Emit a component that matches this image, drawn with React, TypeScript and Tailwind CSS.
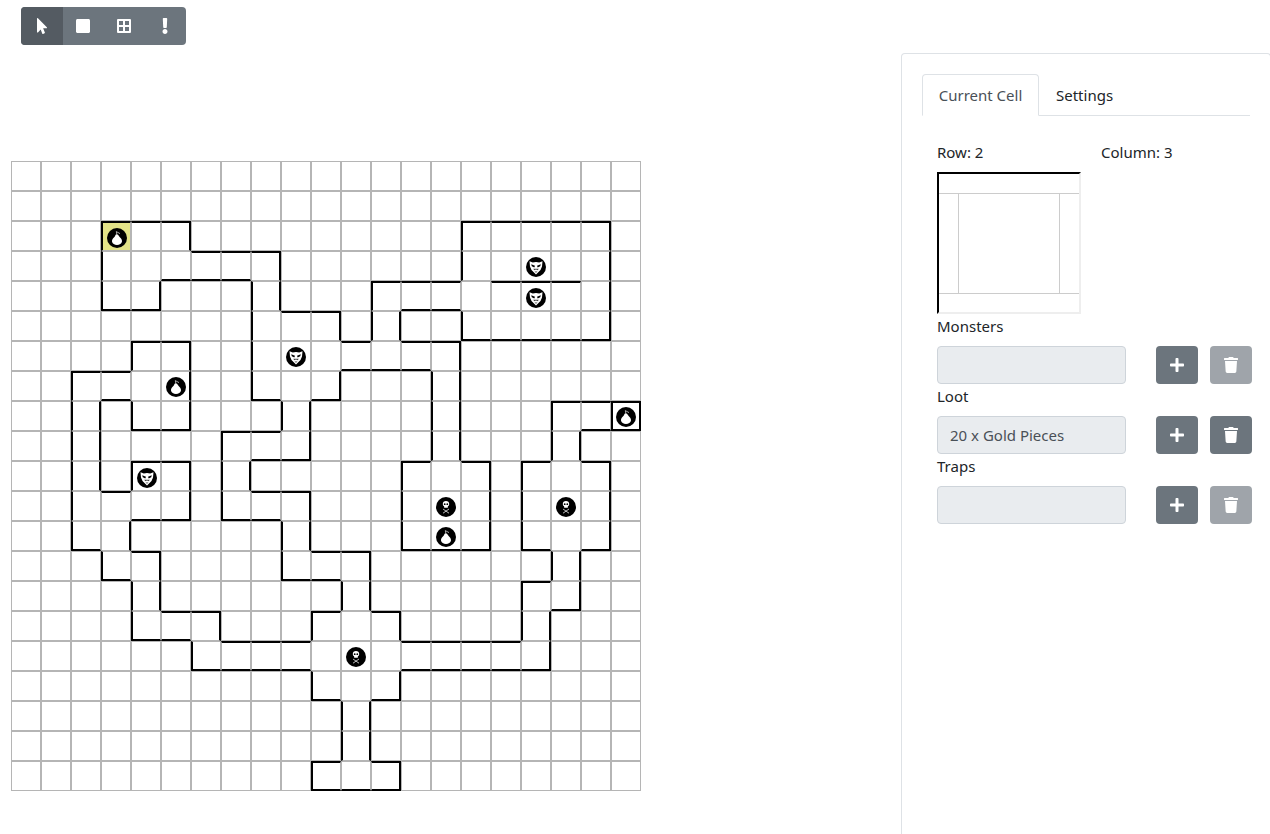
import { FaBorderAll, FaExclamation, FaMousePointer, FaPlus, FaSquare, FaTrash } from "react-icons/fa";

const SIZE = 21;

// [line, from, to, owner] - the wall is drawn inside the cell on the owner's side
const H_WALLS: [number, number, number, "a" | "b"][] = [
  [2, 3, 6, "b"], [3, 6, 9, "b"], [5, 9, 11, "b"], [6, 11, 12, "b"], [4, 12, 15, "b"], [2, 15, 20, "b"],
  [6, 15, 20, "a"], [5, 13, 15, "a"], [6, 13, 15, "b"], [10, 15, 16, "b"], [13, 13, 16, "a"], [10, 13, 14, "b"],
  [7, 11, 14, "a"], [8, 10, 11, "a"], [10, 8, 10, "a"], [11, 8, 10, "b"], [13, 10, 12, "b"], [15, 12, 13, "b"],
  [16, 13, 17, "b"], [14, 17, 18, "b"], [13, 17, 18, "a"], [10, 17, 18, "b"], [8, 18, 21, "b"], [9, 20, 21, "a"],
  [9, 19, 20, "a"], [10, 19, 20, "b"], [13, 19, 20, "a"], [15, 18, 19, "a"], [17, 13, 18, "a"], [18, 12, 13, "a"],
  [20, 12, 13, "b"], [21, 10, 13, "a"], [20, 10, 11, "b"], [18, 10, 11, "a"], [17, 6, 10, "a"], [16, 4, 6, "a"],
  [14, 3, 4, "a"], [13, 2, 3, "a"], [7, 2, 4, "b"], [6, 4, 6, "b"], [9, 4, 6, "a"], [8, 3, 4, "a"],
  [11, 3, 4, "b"], [10, 4, 6, "b"], [12, 4, 6, "a"], [13, 4, 5, "b"], [15, 5, 7, "b"], [16, 7, 10, "b"],
  [15, 10, 11, "b"], [14, 9, 11, "a"], [12, 7, 9, "a"], [9, 7, 9, "b"], [8, 8, 9, "a"], [4, 5, 8, "a"],
  [5, 3, 5, "a"], [4, 16, 19, "b"],
];

const V_WALLS: [number, number, number, "l" | "r"][] = [
  [3, 2, 5, "r"], [6, 2, 3, "l"], [9, 3, 5, "l"], [11, 5, 6, "l"], [12, 4, 6, "r"], [15, 2, 4, "r"],
  [20, 2, 6, "l"], [15, 5, 6, "r"], [13, 5, 6, "l"], [15, 6, 10, "l"], [16, 10, 13, "l"], [13, 10, 13, "r"],
  [14, 7, 10, "r"], [11, 7, 8, "l"], [10, 8, 10, "l"], [8, 10, 11, "l"], [10, 11, 13, "l"], [12, 13, 15, "l"],
  [13, 15, 16, "l"], [17, 14, 16, "r"], [18, 13, 14, "r"], [17, 10, 13, "r"], [18, 8, 10, "r"], [20, 8, 9, "r"],
  [21, 8, 9, "l"], [19, 9, 10, "l"], [20, 10, 13, "l"], [19, 13, 15, "l"], [18, 15, 17, "l"], [13, 17, 18, "l"],
  [12, 18, 20, "l"], [13, 20, 21, "l"], [10, 20, 21, "r"], [11, 18, 20, "r"], [10, 17, 18, "r"], [6, 16, 17, "r"],
  [4, 14, 16, "r"], [3, 13, 14, "r"], [2, 7, 13, "r"], [4, 6, 7, "r"], [6, 6, 9, "l"], [4, 8, 9, "r"],
  [3, 8, 11, "l"], [4, 10, 11, "r"], [6, 10, 12, "l"], [4, 12, 13, "l"], [5, 13, 15, "l"], [7, 15, 16, "l"],
  [10, 15, 16, "r"], [11, 14, 15, "r"], [9, 12, 14, "r"], [7, 9, 12, "r"], [9, 8, 9, "r"], [8, 4, 8, "r"],
  [5, 4, 5, "l"],
];

const ICONS: Record<string, "loot" | "monster" | "trap"> = {
  "2,3": "loot", "7,5": "loot", "8,20": "loot", "12,14": "loot",
  "3,17": "monster", "4,17": "monster", "6,9": "monster", "10,4": "monster",
  "11,14": "trap", "11,18": "trap", "16,11": "trap",
};

function buildWalls() {
  const walls: Record<string, string> = {};
  const add = (r: number, c: number, side: string) => {
    walls[`${r},${c}`] = (walls[`${r},${c}`] || "") + side;
  };
  H_WALLS.forEach(([line, from, to, owner]) => {
    for (let c = from; c < to; c++) {
      if (owner === "b") add(line, c, "t");
      else add(line - 1, c, "b");
    }
  });
  V_WALLS.forEach(([line, from, to, owner]) => {
    for (let r = from; r < to; r++) {
      if (owner === "r") add(r, line, "l");
      else add(r, line - 1, "r");
    }
  });
  return walls;
}

const WALLS = buildWalls();

function LootIcon() {
  return (
    <svg viewBox="0 0 20 20" className="w-5 h-5 mt-[2px]">
      <circle cx="10" cy="10" r="10" fill="#000" />
      <path d="M9.600 6.200C8.400 6.400 8.300 7.900 7.400 8.900 6 10.100 4.800 11.700 5 13.600 5.300 15.900 7.600 17 10 17s4.700-1.100 5-3.400C15.200 11.700 14 10.100 12.600 8.900 11.700 7.900 11.200 6.200 9.600 6.200Z" fill="#fff" />
      <path d="M9.800 6.200 9.300 3.600 13 5.600" stroke="#e5e5e5" strokeWidth="0.7" fill="none" />
    </svg>
  );
}

function MonsterIcon() {
  return (
    <svg viewBox="0 0 20 20" className="w-5 h-5 mt-[2px]">
      <circle cx="10" cy="10" r="10" fill="#000" />
      <path d="M3.500 4.200 6.800 5.600C8.800 4.800 11.200 4.800 13.200 5.600L16.500 4.200 16 9.500 14.500 13 10 17.500 5.500 13 4 9.500Z" fill="#fff" />
      <path d="M5.200 7.200 9 8.800 8.300 10.400 5.800 9.300ZM14.800 7.200 11 8.800 11.700 10.400 14.200 9.300Z" fill="#000" />
      <path d="M7.200 11.800 12.800 11.800 11.700 13.200 10 12.600 8.300 13.200ZM8.500 14.400 11.500 14.400 10 15.800Z" fill="#444" />
    </svg>
  );
}

function TrapIcon() {
  return (
    <svg viewBox="0 0 20 20" className="w-5 h-5 mt-[2px]">
      <circle cx="10" cy="10" r="10" fill="#000" />
      <path d="M10 4C8 4 6.800 5.300 6.800 7 6.800 8.200 7.400 8.900 8.100 9.300L8.200 10.800 11.800 10.800 11.900 9.300C12.600 8.900 13.200 8.200 13.200 7 13.200 5.300 12 4 10 4Z" fill="#fff" />
      <circle cx="8.700" cy="7.200" r="0.900" fill="#000" />
      <circle cx="11.300" cy="7.200" r="0.900" fill="#000" />
      <path d="M7 12 13 16.200M13 12 7 16.200" stroke="#bbb" strokeWidth="1" />
    </svg>
  );
}

function Cell({ row, col }: { row: number; col: number }) {
  const key = `${row},${col}`;
  const wall = WALLS[key] || "";
  const icon = ICONS[key];
  const selected = row === 2 && col === 3;
  return (
    <div
      className={`w-[30px] h-[30px] flex items-center justify-center border border-[#b5b5b5] ${
        wall.includes("t") ? "border-t-2 border-t-black" : ""
      } ${wall.includes("r") ? "border-r-2 border-r-black" : ""} ${
        wall.includes("b") ? "border-b-2 border-b-black" : ""
      } ${wall.includes("l") ? "border-l-2 border-l-black" : ""} ${selected ? "bg-[#e3e388]" : ""}`}
    >
      {icon === "loot" && <LootIcon />}
      {icon === "monster" && <MonsterIcon />}
      {icon === "trap" && <TrapIcon />}
    </div>
  );
}

function Toolbar() {
  return (
    <div className="flex w-[165px] h-[38px] rounded overflow-hidden bg-[#6c757d] text-white">
      <button className="w-[41.500px] flex items-center justify-center bg-[#545b62]">
        <FaMousePointer className="w-[16px] h-[16px]" />
      </button>
      <button className="w-[41.250px] flex items-center justify-center">
        <FaSquare className="w-[14px] h-[16px]" />
      </button>
      <button className="w-[41.250px] flex items-center justify-center">
        <FaBorderAll className="w-[14px] h-[16px]" />
      </button>
      <button className="w-[40px] flex items-center justify-center">
        <FaExclamation className="w-[16px] h-[16px]" />
      </button>
    </div>
  );
}

function ItemRow({ label, value }: { label: string; value?: string }) {
  return (
    <div>
      <div className="h-6 leading-6 mb-2">{label}</div>
      <div className="flex">
        <div className="w-[189px] shrink-0 h-[38px] bg-[#e9ecef] border border-[#ced4da] rounded px-3 leading-[37px] text-[#495057]">
          {value}
        </div>
        <button className="ml-[30px] w-[42px] shrink-0 h-[38px] rounded bg-[#6c757d] text-white flex items-center justify-center">
          <FaPlus className="w-[14px] h-[16px]" />
        </button>
        <button
          className={`ml-[12px] w-[42px] shrink-0 h-[38px] rounded bg-[#6c757d] text-white flex items-center justify-center ${
            value ? "" : "opacity-65"
          }`}
        >
          <FaTrash className="w-[14px] h-[16px]" />
        </button>
      </div>
    </div>
  );
}

function SidePanel() {
  return (
    <div className="w-[370px] shrink-0 h-[781px] mt-[53px] border-l border-t border-r border-[#dee2e6] rounded-t pl-5 pr-5 pt-5">
      <div className="flex h-[42px] border-b border-[#dee2e6]">
        <div className="w-[117px] h-[42px] text-center leading-[40px] text-[#495057] bg-white border border-[#dee2e6] border-b-white rounded-t">
          Current Cell
        </div>
        <div className="px-[17px] leading-[42px]">Settings</div>
      </div>
      <div className="pl-[15px] pt-[24px]">
        <div className="flex h-6 leading-6 mb-2">
          <div className="w-[164px]">Row: 2</div>
          <div>Column: 3</div>
        </div>
        <div className="w-[144px] h-[142px] border-2 border-t-black border-l-black border-r-[#eeeeee] border-b-[#eeeeee] flex flex-col">
          <div className="h-[20px] border-b border-[#cccccc]" />
          <div className="h-[99px] flex">
            <div className="w-[20px] border-r border-[#cccccc]" />
            <div className="w-[101px] border-r border-[#cccccc]" />
          </div>
          <div className="flex-1 border-t border-[#cccccc]" />
        </div>
        <ItemRow label="Monsters" />
        <ItemRow label="Loot" value="20 x Gold Pieces" />
        <ItemRow label="Traps" />
      </div>
    </div>
  );
}

export default function App() {
  const rows = Array.from({ length: SIZE }, (_, i) => i);
  return (
    <div className="flex h-[834px] overflow-hidden bg-white text-[#212529] text-[15px] font-['Noto_Sans',sans-serif]">
      <div className="w-[901px] shrink-0 pt-[7px]">
        <div className="ml-[21px]">
          <Toolbar />
        </div>
        <div className="ml-[11px] mt-[116px] grid grid-cols-[repeat(21,30px)] w-[630px]">
          {rows.map((r) => rows.map((c) => <Cell key={`${r}-${c}`} row={r} col={c} />))}
        </div>
      </div>
      <SidePanel />
    </div>
  );
}
